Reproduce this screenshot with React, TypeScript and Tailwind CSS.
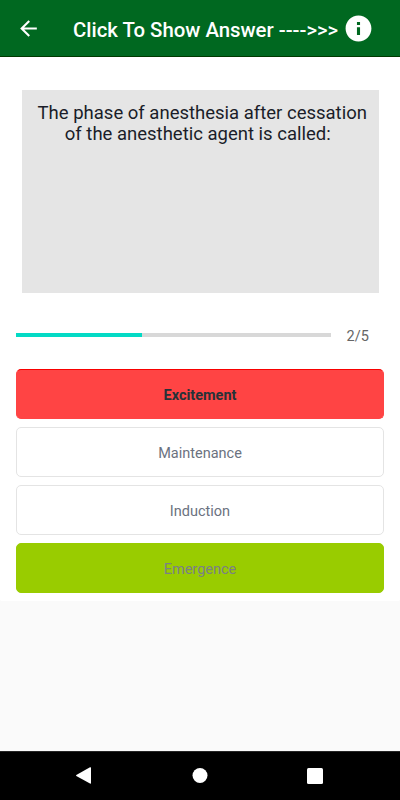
import React from "react";

const options = [
  { label: "Excitement", box: "border-x-[#ff4444] border-t-[#f80000] border-b-[#ff4444] bg-[#ff4444]", text: "font-bold text-[#263238]" },
  { label: "Maintenance", box: "border-[#e4e4e4] bg-white", text: "text-[#6b7280]" },
  { label: "Induction", box: "border-[#e4e4e4] bg-white", text: "text-[#6b7280]" },
  { label: "Emergence", box: "border-[#99cc00] bg-[#99cc00]", text: "text-[#7a8087]" },
];

export default function App() {
  return (
    <div className="flex h-[800px] w-[400px] flex-col overflow-hidden bg-[#fafafa] font-['Roboto',sans-serif]">
      <header className="flex h-[57px] shrink-0 items-center border-b border-[#003a00] bg-[#006820] text-white">
        <svg className="ml-[16px] mt-px h-[25px] w-[25px] shrink-0" viewBox="0 0 24 24" fill="currentColor">
          <path d="M20 11H7.83l5.59-5.59L12 4l-8 8 8 8 1.41-1.41L7.83 13H20z" />
        </svg>
        <h1 className="ml-[32px] mt-[3px] w-[266px] whitespace-nowrap text-[20.350px] font-medium leading-6">
          {"Click To Show Answer ---->>>"}
        </h1>
        <svg className="ml-[3.500px] mt-px h-[31px] w-[31px] shrink-0" viewBox="0 0 24 24" fill="currentColor">
          <path d="M12 2C6.48 2 2 6.48 2 12s4.480 10 10 10 10-4.480 10-10S17.520 2 12 2zm1.200 15h-2.400v-6h2.400v6zm0-7.700h-2.400V7h2.400v2.300z" />
        </svg>
      </header>

      <main className="h-[544px] shrink-0 rounded-b-[2px] bg-white px-4 pt-[33px]">
        <section className="ml-[6px] h-[203px] w-[356.500px] bg-[#e5e5e5] pt-[13px]">
          <p className="text-center text-[18.500px] leading-[21px] text-[#1a1d29]">
            <span className="block whitespace-nowrap pl-[4px]">The phase of anesthesia after cessation</span>
            <span className="block whitespace-nowrap pr-[5px]">of the anesthetic agent is called:</span>
          </p>
        </section>

        <div className="mt-[32px] flex h-5 items-center">
          <div className="h-1 w-[315px] bg-[#d8d8d8]">
            <div className="h-full w-[40%] bg-[#03dac5]" />
          </div>
          <span className="ml-[15.500px] pt-[3px] text-[14.500px] leading-5 text-[#666666]">2/5</span>
        </div>

        <div className="mt-[24px] flex flex-col gap-2">
          {options.map((o) => (
            <button key={o.label} className={`flex h-[50px] w-full items-center justify-center rounded-[5px] border ${o.box}`}>
              <span className={`pt-[4px] text-[14.500px] leading-5 ${o.text}`}>{o.label}</span>
            </button>
          ))}
        </div>
      </main>

      <div className="flex-1" />

      <nav className="flex h-[49px] shrink-0 items-center border-t border-[#262626] bg-black text-white">
        <svg className="mb-px ml-[76px] h-[17px] w-[15px]" viewBox="0 0 15 17" fill="currentColor">
          <path d="M.3 8 14 .3Q15 0 15 .8V16Q15 17 14 16.500L.3 9Q-.1 8.500.3 8Z" />
        </svg>
        <svg className="mb-px ml-[101px] h-4 w-4" viewBox="0 0 16 16" fill="currentColor">
          <circle cx="8" cy="7.500" r="7.500" />
        </svg>
        <span className="ml-[99px] h-4 w-4 rounded-[1.500px] bg-white" />
      </nav>
    </div>
  );
}
